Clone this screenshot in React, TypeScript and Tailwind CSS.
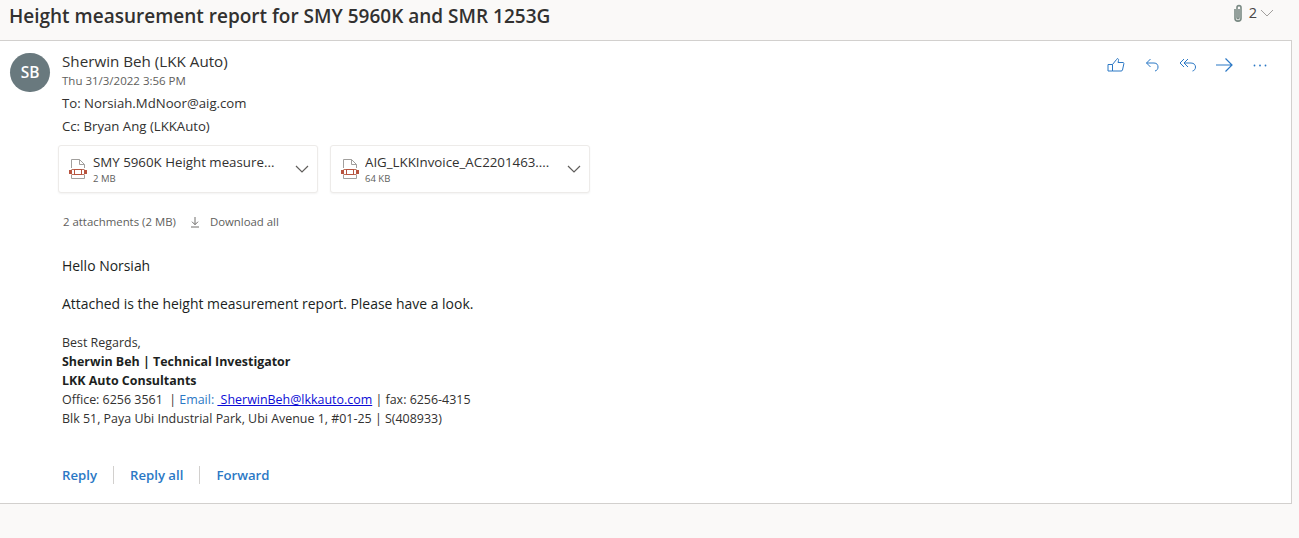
import React from "react"

const PdfIcon = () => (
  <svg width="20" height="22" viewBox="0 0 20 22" fill="none" className="shrink-0">
    <path d="M3.5 10V1.5H11.5L16.5 6.5V10M16.5 17V20.5H3.5V17" stroke="#a19f9d" strokeWidth="1" />
    <path d="M11.5 1.5V6.5H16.5" stroke="#a19f9d" strokeWidth="1" />
    <path d="M3.5 11.5H16.5M3.5 16.5H16.5" stroke="#b8735f" strokeWidth="1" />
    <rect x="6.5" y="11.5" width="7" height="5" stroke="#b8543f" strokeWidth="1" />
    <rect x="1" y="12" width="3" height="4" fill="#b8543f" />
    <rect x="16" y="12" width="3" height="4" fill="#b8543f" />
  </svg>
)

const Chevron = () => (
  <svg width="14" height="8" viewBox="0 0 14 8" fill="none">
    <path d="M1 1L7 7L13 1" stroke="#605e5c" strokeWidth="1.2" />
  </svg>
)

const Attachment = ({ name, size, width }: { name: string; size: string; width: string }) => (
  <div className={`flex h-[48px] items-center rounded-[3px] border border-[#edebe9] bg-white pl-[9px] pr-[8px] shadow-[0_1px_2px_rgba(0,0,0,0.05)] ${width}`}>
    <PdfIcon />
    <div className="ml-[5px] min-w-0 flex-1 pt-[1px]">
      <div className="truncate text-[13.3px] leading-[18px] text-[#323130]">{name}</div>
      <div className="mt-[1px] text-[9.5px] leading-[14px] text-[#605e5c]">{size}</div>
    </div>
    <Chevron />
  </div>
)

const App = () => {
  return (
    <div className="flex h-[538px] w-[1299px] flex-col overflow-hidden bg-[#faf9f8] font-['Open_Sans',sans-serif]">
      <div className="flex h-[40px] shrink-0 items-start justify-between pr-[25px]">
        <h1 className="pl-[9px] pt-[2px] text-[19px] font-semibold leading-[28px] text-[#323130]">
          Height measurement report for SMY 5960K and SMR 1253G
        </h1>
        <div className="flex items-center pt-[1px] text-[#484644]">
          <svg width="12" height="19" viewBox="0 0 12 19" fill="none">
            <path d="M3 5V14.5C3 18 9 18 9 14.5V3.5C9 1 5 1 5 3.5V13.5C5 15 7 15 7 13.5V5" stroke="#7a8a84" strokeWidth="1.6" />
          </svg>
          <span className="ml-[5px] text-[14.5px] leading-[24px]">2</span>
          <svg width="14" height="8" viewBox="0 0 14 8" fill="none" className="ml-[3px]">
            <path d="M1 1L7 7L13 1" stroke="#a19f9d" strokeWidth="1" />
          </svg>
        </div>
      </div>

      <div className="ml-[-1px] h-[464px] w-[1293px] shrink-0 border border-[#d2d0ce] bg-white">
        <div className="flex items-start">
          <div className="ml-[10px] mt-[12px] flex h-[39px] w-[40px] shrink-0 items-center justify-center rounded-full bg-[#69797e] text-[15.5px] font-semibold text-white">
            SB
          </div>
          <div className="ml-[12px] mt-[10px] flex-1">
            <div className="text-[15.2px] leading-[20px] text-[#323130]">Sherwin Beh (LKK Auto)</div>
            <div className="mt-[1px] text-[11.5px] leading-[17px] text-[#605e5c]">Thu 31/3/2022 3:56 PM</div>
            <div className="mt-[5px] text-[13.2px] leading-[18px] text-[#323130]">To: Norsiah.MdNoor@aig.com</div>
            <div className="mt-[5px] text-[13.2px] leading-[18px] text-[#323130]">Cc: Bryan Ang (LKKAuto)</div>
          </div>
          <div className="mr-[22px] mt-[15px] flex items-center gap-[18px] text-[#2b78c5]">
            <svg width="18" height="18" viewBox="0 0 18 18" fill="none" stroke="currentColor" strokeWidth="1">
              <path d="M1 8.5H5.5L9.5 3.5C10 2 12 2.5 11.5 4.5L11 6.5H16C16.8 6.5 17 7.2 16.8 8L15.5 14C15.3 14.8 14.8 15 14 15H5.5L1 15Z" />
              <path d="M5.5 8.5V15" />
            </svg>
            <svg width="18" height="18" viewBox="0 0 18 18" fill="none" stroke="currentColor" strokeWidth="1">
              <path d="M7.5 3L3.5 7L7.5 11M3.5 7H11C14 7 15 9 15 11C15 13 14 14.5 12 15" />
            </svg>
            <svg width="18" height="18" viewBox="0 0 18 18" fill="none" stroke="currentColor" strokeWidth="1">
              <path d="M5 3L1 7L5 11M9 3L5 7L9 11M5 7H12C15 7 16.5 9 16.5 11C16.5 13 15.5 14.5 13.5 15" />
            </svg>
            <svg width="18" height="18" viewBox="0 0 18 18" fill="none" stroke="currentColor" strokeWidth="1.2">
              <path d="M1 9H17M10.5 2.5L17 9L10.5 15.5" />
            </svg>
            <svg width="18" height="18" viewBox="0 0 18 18" fill="currentColor">
              <circle cx="3.5" cy="9.5" r="0.9" />
              <circle cx="9" cy="9.5" r="0.9" />
              <circle cx="14.5" cy="9.5" r="0.9" />
            </svg>
          </div>
        </div>

        <div className="ml-[58px] mt-[10px] flex gap-[12px]">
          <Attachment name="SMY 5960K Height measure..." size="2 MB" width="w-[260px]" />
          <Attachment name="AIG_LKKInvoice_AC2201463...." size="64 KB" width="w-[260px]" />
        </div>

        <div className="ml-[63px] mt-[20px] flex items-center text-[11.4px] leading-[18px] text-[#605e5c]">
          <span>2 attachments (2 MB)</span>
          <svg width="12" height="12" viewBox="0 0 12 12" fill="none" stroke="#605e5c" strokeWidth="0.9" className="ml-[13px]">
            <path d="M6 1V8.5M3 5.7L6 8.7L9 5.7M2 11H10" />
          </svg>
          <span className="ml-[9px]">Download all</span>
        </div>

        <div className="ml-[62px] mt-[25px] text-[13.95px] leading-[19px] text-[#201f1e]">
          <p>Hello Norsiah</p>
          <p className="mt-[19px]">Attached is the height measurement report. Please have a look.</p>
        </div>

        <div className="ml-[62px] mt-[20px] text-[12.45px] leading-[19px] text-[#323130]">
          <p>Best Regards,</p>
          <p className="font-bold text-[#201f1e]">Sherwin Beh | Technical Investigator</p>
          <p className="font-bold text-[#201f1e]">LKK Auto Consultants</p>
          <p>
            Office: 6256 3561&nbsp; | <span className="text-[#2b78c5]">Email: </span>
            <span className="text-[#0b0bd6] underline">&nbsp;SherwinBeh@lkkauto.com</span> | fax: 6256-4315
          </p>
          <p>Blk 51, Paya Ubi Industrial Park, Ubi Avenue 1, #01-25 | S(408933)</p>
        </div>

        <div className="ml-[62px] mt-[37px] flex items-center text-[13.2px] font-semibold leading-[20px] text-[#2b78c5]">
          <span>Reply</span>
          <span className="mx-[16px] h-[18px] w-px bg-[#d2d0ce]" />
          <span>Reply all</span>
          <span className="mx-[16px] h-[18px] w-px bg-[#d2d0ce]" />
          <span>Forward</span>
        </div>
      </div>
    </div>
  )
}

export default App
